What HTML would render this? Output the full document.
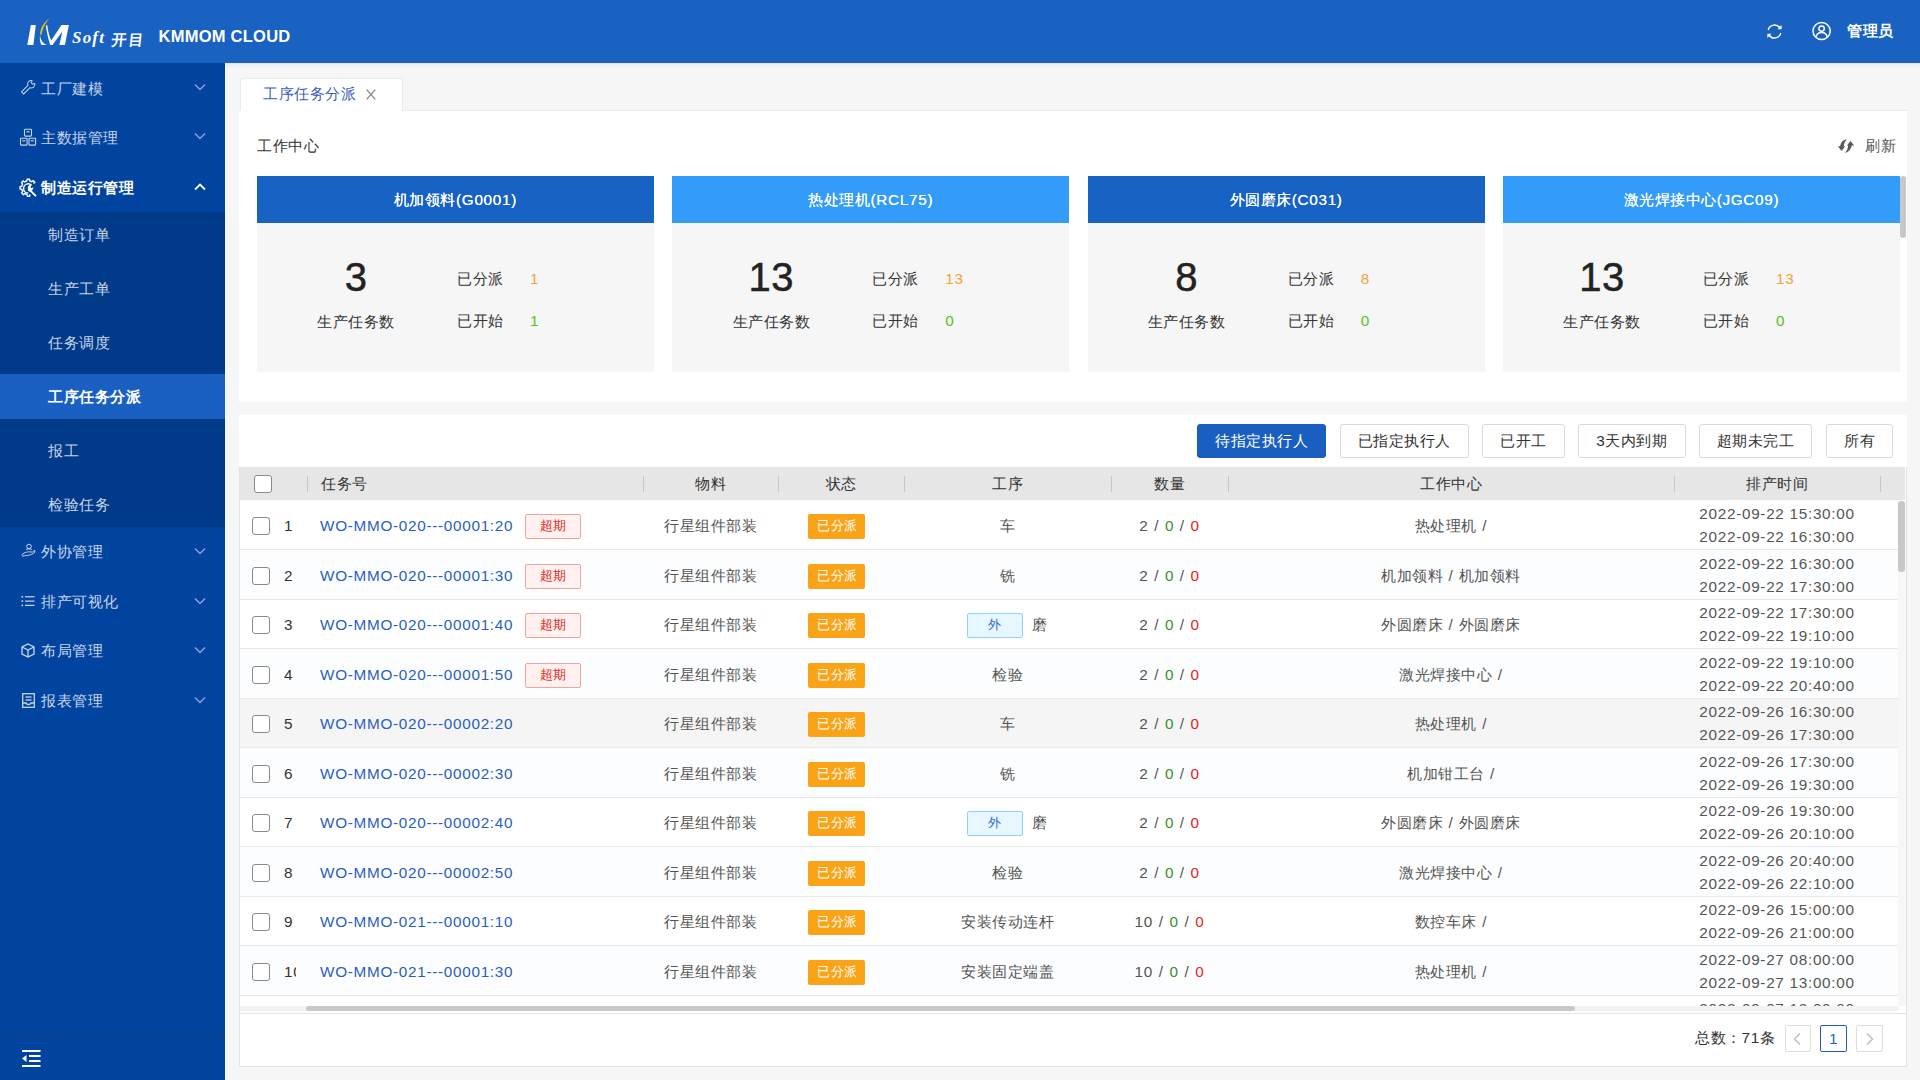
<!DOCTYPE html><html><head><meta charset="utf-8"><style>
*{box-sizing:border-box;margin:0;padding:0}
html,body{width:1920px;height:1080px;overflow:hidden;background:#f6f6f6;font-family:"Liberation Sans",sans-serif;font-size:15px;letter-spacing:0.5px;color:#333}
.L{font-size:15.3px;letter-spacing:0.7px}
.abs{position:absolute}
.t{position:absolute;white-space:nowrap;line-height:20px}
.c{text-align:center}
svg{position:absolute;overflow:visible}
</style></head><body>
<div class="abs" style="left:0px;top:0px;width:1920px;height:63px;background:#1962c2"></div>
<svg style="left:0;top:0" width="160" height="63">
<path d="M40 34.5 C40.5 27.5 44.5 21 49.5 18.4 C45.5 22.5 42.5 28 41.3 35 Z" fill="#f5c400"/>
<path d="M30.9 25 L35.8 25 L33.4 44.9 L27.3 44.9 Z" fill="#fff"/>
<path d="M40 35 C40.5 40 43 43.5 46.8 44.9 L41.5 44.9 C40 42.5 39.5 39 40 35Z" fill="#fff"/>
<path d="M45.8 25.3 L47.2 25.3 C48 31 49.5 37 51.2 40.5 L61.5 25 L68.9 25 L64.9 44.9 L59.4 44.9 L62.3 31.5 L52.5 44.9 L50.2 44.9 C48 38 46.5 31 45.8 25.3Z" fill="#fff"/>
</svg>
<div class="t" style="left:72px;top:29px;font-family:'Liberation Serif',serif;font-style:italic;font-weight:bold;font-size:17px;color:#fff;line-height:17px;letter-spacing:1.2px">Soft</div>
<div class="t" style="left:112px;top:31px;font-size:15px;color:#fff;font-weight:bold;line-height:17px;letter-spacing:2px;transform:skewX(-6deg)">开目</div>
<div class="t" style="left:158.5px;top:26px;font-size:16.5px;font-weight:bold;color:#fff;letter-spacing:0.25px;line-height:20px">KMMOM CLOUD</div>
<svg style="left:1766px;top:23px" width="17" height="17" viewBox="0 0 17 17">
<path d="M2.2 7 A6.5 6.5 0 0 1 14 5" fill="none" stroke="#fff" stroke-width="1.4"/>
<path d="M14.8 10 A6.5 6.5 0 0 1 3 12" fill="none" stroke="#fff" stroke-width="1.4"/>
<path d="M15.6 2 L15.6 6.2 L11.6 6.2 Z" fill="#fff"/>
<path d="M1.4 15 L1.4 10.8 L5.4 10.8 Z" fill="#fff"/>
</svg>
<svg style="left:1812px;top:21px" width="20" height="20" viewBox="0 0 20 20">
<circle cx="9.6" cy="10" r="8.6" fill="none" stroke="#fff" stroke-width="1.5"/>
<circle cx="9.6" cy="7.6" r="2.7" fill="none" stroke="#fff" stroke-width="1.5"/>
<path d="M3.8 16.6 C4.5 12.8 7 11.6 9.6 11.6 C12.2 11.6 14.7 12.8 15.4 16.6" fill="none" stroke="#fff" stroke-width="1.5"/>
</svg>
<div class="t" style="left:1847px;top:21px;font-weight:bold;color:#fff">管理员</div>
<div class="abs" style="left:0px;top:63px;width:225px;height:1017px;background:#0044a0"></div>
<div class="abs" style="left:0px;top:212px;width:225px;height:315px;background:#003a88"></div>
<div class="abs" style="left:0px;top:374px;width:225px;height:45px;background:#1a60c2"></div>
<div class="t" style="left:41px;top:79.2px;color:#c9d5ea;">工厂建模</div>
<svg style="left:194px;top:83px" width="12" height="8" viewBox="0 0 12 8"><path d="M1 1.5 L6 6.5 L11 1.5" fill="none" stroke="#8ea6d4" stroke-width="1.4"/></svg>
<div class="t" style="left:41px;top:128.2px;color:#c9d5ea;">主数据管理</div>
<svg style="left:194px;top:132px" width="12" height="8" viewBox="0 0 12 8"><path d="M1 1.5 L6 6.5 L11 1.5" fill="none" stroke="#8ea6d4" stroke-width="1.4"/></svg>
<div class="t" style="left:41px;top:177.7px;color:#fff;font-weight:bold;">制造运行管理</div>
<svg style="left:194px;top:183px" width="12" height="8" viewBox="0 0 12 8"><path d="M1 6.5 L6 1.5 L11 6.5" fill="none" stroke="#fff" stroke-width="1.8"/></svg>
<div class="t" style="left:48px;top:224.7px;color:#c9d5ea;">制造订单</div>
<div class="t" style="left:48px;top:278.7px;color:#c9d5ea;">生产工单</div>
<div class="t" style="left:48px;top:332.7px;color:#c9d5ea;">任务调度</div>
<div class="t" style="left:48px;top:440.7px;color:#c9d5ea;">报工</div>
<div class="t" style="left:48px;top:494.7px;color:#c9d5ea;">检验任务</div>
<div class="t" style="left:48px;top:386.7px;color:#fff;font-weight:bold;">工序任务分派</div>
<div class="t" style="left:41px;top:541.7px;color:#c9d5ea;">外协管理</div>
<svg style="left:194px;top:547px" width="12" height="8" viewBox="0 0 12 8"><path d="M1 1.5 L6 6.5 L11 1.5" fill="none" stroke="#8ea6d4" stroke-width="1.4"/></svg>
<div class="t" style="left:41px;top:591.7px;color:#c9d5ea;">排产可视化</div>
<svg style="left:194px;top:597px" width="12" height="8" viewBox="0 0 12 8"><path d="M1 1.5 L6 6.5 L11 1.5" fill="none" stroke="#8ea6d4" stroke-width="1.4"/></svg>
<div class="t" style="left:41px;top:641.2px;color:#c9d5ea;">布局管理</div>
<svg style="left:194px;top:646px" width="12" height="8" viewBox="0 0 12 8"><path d="M1 1.5 L6 6.5 L11 1.5" fill="none" stroke="#8ea6d4" stroke-width="1.4"/></svg>
<div class="t" style="left:41px;top:691.2px;color:#c9d5ea;">报表管理</div>
<svg style="left:194px;top:696px" width="12" height="8" viewBox="0 0 12 8"><path d="M1 1.5 L6 6.5 L11 1.5" fill="none" stroke="#8ea6d4" stroke-width="1.4"/></svg>
<svg style="left:14px;top:74px" width="30" height="30" viewBox="14 74 30 30" fill="none" stroke="#c9d5ea" stroke-width="1">
<path transform="translate(22.6,92.9) rotate(-45)" d="M0 -1.5 L9 -1.5 A3.5 3.5 0 0 1 15.3 -1.9 L13.3 -1.1 L13.3 1.1 L15.3 1.9 A3.5 3.5 0 0 1 9 1.5 L0 1.5 Z"/></svg>
<svg style="left:14px;top:124px" width="30" height="26" viewBox="14 124 30 26" fill="none" stroke="#c9d5ea" stroke-width="1.1">
<rect x="24.5" y="129.3" width="7" height="6.8" rx="0.8"/><path d="M26.3 131.8 H29.7"/>
<rect x="20.5" y="138.3" width="6.6" height="6.8" rx="0.6"/><path d="M22.2 140.8 H25.4"/>
<rect x="29" y="138.3" width="6.6" height="6.8" rx="0.6"/><path d="M30.7 140.8 H33.9"/></svg>
<svg style="left:16.3px;top:176px" width="30" height="26" viewBox="14 174 30 26" fill="none" stroke="#fff" stroke-width="1.4">
<path d="M31.5 181.5 L32.8 180.2 L31.2 178.6 L29.6 179.6 C29 179.3 28.4 179.1 27.8 179 L27.4 177.2 L25.2 177.2 L24.8 179 C24 179.2 23.3 179.5 22.7 180 L21.1 179 L19.6 180.6 L20.6 182.2 C20.2 182.8 19.9 183.5 19.8 184.3 L18 184.7 L18 186.9 L19.8 187.3 C19.9 188.1 20.2 188.8 20.7 189.4 L19.7 191 L21.3 192.6 L22.9 191.6 C23.5 192 24.2 192.3 25 192.5 L25.4 194.3 L27.6 194.3 L28 192.5"/>
<path d="M29.5 183.2 C28.6 182.2 27.4 181.8 26.2 181.8 C23.6 181.8 21.6 183.8 21.6 186.4 C21.6 189 23.6 191 26.2 191"/>
</svg>
<svg style="left:16.3px;top:176px" width="30" height="26" viewBox="14 174 30 26" fill="#fff">
<path d="M26 184.6 C26.6 183.2 28.2 182.6 29.6 183.2 L28.4 185 L29.4 186.2 L31.2 185.2 C31.6 186.6 30.8 188 29.6 188.4 L34.6 193.4 L33.2 194.8 L28 189.6 C26.6 190 25.4 188.8 26 184.6 Z"/>
</svg>
<svg style="left:21px;top:543px" width="15" height="15" viewBox="0 0 15 15" fill="none" stroke="#c9d5ea" stroke-width="1">
<circle cx="8" cy="3.5" r="2.3"/><path d="M5 7 C5 5.5 11 5.5 11 7"/><path d="M0.5 12 C4 9 7 8.5 10 9 C12 9.5 13.5 8 13.5 7 L14 9 C12 11.5 8 12.5 1 13"/></svg>
<svg style="left:21px;top:594px" width="14" height="14" viewBox="0 0 14 14" fill="#c9d5ea">
<rect x="0.5" y="2" width="1.6" height="1.6"/><rect x="0.5" y="6.3" width="1.6" height="1.6"/><rect x="0.5" y="10.6" width="1.6" height="1.6"/>
<rect x="4" y="2.2" width="9.5" height="1.2"/><rect x="4" y="6.5" width="9.5" height="1.2"/><rect x="4" y="10.8" width="9.5" height="1.2"/></svg>
<svg style="left:21px;top:643px" width="14" height="15" viewBox="0 0 14 15" fill="none" stroke="#c9d5ea" stroke-width="1.3">
<path d="M7 1 L13 4 L13 11 L7 14 L1 11 L1 4 Z"/><path d="M1 4 L7 7 L13 4"/><path d="M7 7 L7 14"/></svg>
<svg style="left:22px;top:693px" width="13" height="15" viewBox="0 0 13 15" fill="none" stroke="#c9d5ea" stroke-width="1.3">
<rect x="0.7" y="0.7" width="11.6" height="13.6"/><path d="M3.5 4 L9.5 4"/><path d="M3.5 7 L9.5 7"/><path d="M0.7 10 L4 10 C4.5 12 8.5 12 9 10 L12.3 10"/></svg>
<div class="abs" style="left:0px;top:1035px;width:225px;height:1px;background:#1d3d7a"></div>
<svg style="left:22px;top:1050px" width="19" height="17" viewBox="0 0 19 17" fill="#fff">
<rect x="0" y="0" width="18.5" height="2"/><rect x="7" y="5" width="11.5" height="2"/><rect x="7" y="10" width="11.5" height="2"/><rect x="0" y="15" width="18.5" height="2"/>
<path d="M0 8.5 L4.5 5 L4.5 12 Z"/></svg>
<div class="abs" style="left:225px;top:63px;width:1695px;height:5px;background:linear-gradient(#e8e8e8,#f6f6f6)"></div>
<div class="abs" style="left:239px;top:109.5px;width:1668px;height:292.5px;background:#fff;border-top:1px solid #ebebeb"></div>
<div class="abs" style="left:239.5px;top:77.5px;width:163.5px;height:33px;background:#fff;border:1px solid #ebebeb;border-bottom:none;border-radius:3px 3px 0 0"></div>
<div class="t" style="left:263px;top:83.5px;color:#3d5cb4">工序任务分派</div>
<svg style="left:366px;top:88.5px" width="10" height="11" viewBox="0 0 10 11"><path d="M0.7 0.7 L9.3 10.3 M9.3 0.7 L0.7 10.3" stroke="#808080" stroke-width="1.2"/></svg>
<div class="t" style="left:257px;top:135.5px;color:#333">工作中心</div>
<svg style="left:1832px;top:134px" width="28" height="24" viewBox="0 0 28 24" fill="#585858">
<path d="M14.9 5 C11 5.8 8.6 8.5 8.1 12.3 L5.9 12.3 L9.5 16.9 L13.1 12.3 L11.8 12.3 C12 9.5 13 7.3 14.9 5 Z"/>
<path d="M12.8 18.9 C16.6 18 19.1 15 19.7 11.4 L22.1 11.4 L18.5 6.9 L14.9 11.4 L16.1 11.4 C15.9 14.5 14.8 16.8 12.8 18.9 Z"/></svg>
<div class="t" style="left:1865px;top:136px;color:#555">刷新</div>
<div class="abs" style="left:257.0px;top:176px;width:397px;height:195.5px;background:#f6f6f6"></div>
<div class="abs" style="left:257.0px;top:176px;width:397px;height:46.8px;background:#1762c3"></div>
<div class="t c" style="left:257.0px;top:189.5px;width:397px;color:#fff;text-shadow:0 0 0.4px #fff">机加领料<span class=L>(G0001)</span></div>
<div class="t c" style="left:256.0px;top:257px;width:200px;font-size:40px;line-height:40px;color:#222;-webkit-text-stroke:0.5px #222">3</div>
<div class="t c" style="left:256.0px;top:311.5px;width:200px;color:#333">生产任务数</div>
<div class="t" style="left:457.0px;top:268.5px;color:#333">已分派</div>
<div class="t L" style="left:530.0px;top:268.5px;color:#f5a13a">1</div>
<div class="t" style="left:457.0px;top:310.5px;color:#333">已开始</div>
<div class="t L" style="left:530.0px;top:310.5px;color:#52c41a">1</div>
<div class="abs" style="left:672.3299999999999px;top:176px;width:397px;height:195.5px;background:#f6f6f6"></div>
<div class="abs" style="left:672.3299999999999px;top:176px;width:397px;height:46.8px;background:#339bf8"></div>
<div class="t c" style="left:672.3299999999999px;top:189.5px;width:397px;color:#fff;text-shadow:0 0 0.4px #fff">热处理机<span class=L>(RCL75)</span></div>
<div class="t c" style="left:671.3299999999999px;top:257px;width:200px;font-size:40px;line-height:40px;color:#222;-webkit-text-stroke:0.5px #222">13</div>
<div class="t c" style="left:671.3299999999999px;top:311.5px;width:200px;color:#333">生产任务数</div>
<div class="t" style="left:872.3299999999999px;top:268.5px;color:#333">已分派</div>
<div class="t L" style="left:945.3299999999999px;top:268.5px;color:#f5a13a">13</div>
<div class="t" style="left:872.3299999999999px;top:310.5px;color:#333">已开始</div>
<div class="t L" style="left:945.3299999999999px;top:310.5px;color:#52c41a">0</div>
<div class="abs" style="left:1087.6599999999999px;top:176px;width:397px;height:195.5px;background:#f6f6f6"></div>
<div class="abs" style="left:1087.6599999999999px;top:176px;width:397px;height:46.8px;background:#1762c3"></div>
<div class="t c" style="left:1087.6599999999999px;top:189.5px;width:397px;color:#fff;text-shadow:0 0 0.4px #fff">外圆磨床<span class=L>(C031)</span></div>
<div class="t c" style="left:1086.6599999999999px;top:257px;width:200px;font-size:40px;line-height:40px;color:#222;-webkit-text-stroke:0.5px #222">8</div>
<div class="t c" style="left:1086.6599999999999px;top:311.5px;width:200px;color:#333">生产任务数</div>
<div class="t" style="left:1287.6599999999999px;top:268.5px;color:#333">已分派</div>
<div class="t L" style="left:1360.6599999999999px;top:268.5px;color:#f5a13a">8</div>
<div class="t" style="left:1287.6599999999999px;top:310.5px;color:#333">已开始</div>
<div class="t L" style="left:1360.6599999999999px;top:310.5px;color:#52c41a">0</div>
<div class="abs" style="left:1502.99px;top:176px;width:397px;height:195.5px;background:#f6f6f6"></div>
<div class="abs" style="left:1502.99px;top:176px;width:397px;height:46.8px;background:#339bf8"></div>
<div class="t c" style="left:1502.99px;top:189.5px;width:397px;color:#fff;text-shadow:0 0 0.4px #fff">激光焊接中心<span class=L>(JGC09)</span></div>
<div class="t c" style="left:1501.99px;top:257px;width:200px;font-size:40px;line-height:40px;color:#222;-webkit-text-stroke:0.5px #222">13</div>
<div class="t c" style="left:1501.99px;top:311.5px;width:200px;color:#333">生产任务数</div>
<div class="t" style="left:1702.99px;top:268.5px;color:#333">已分派</div>
<div class="t L" style="left:1775.99px;top:268.5px;color:#f5a13a">13</div>
<div class="t" style="left:1702.99px;top:310.5px;color:#333">已开始</div>
<div class="t L" style="left:1775.99px;top:310.5px;color:#52c41a">0</div>
<div class="abs" style="left:1900px;top:176px;width:6px;height:62px;background:#c8c8c8;border-radius:3px"></div>
<div class="abs" style="left:239px;top:415px;width:1668px;height:652px;background:#fff"></div>
<div class="abs" style="left:239px;top:467px;width:1668px;height:600px;border:1px solid #e2e2e2;border-top:none"></div>
<div class="abs" style="left:1197px;top:424px;width:129px;height:34px;border-radius:3px;background:#1a5fc0;color:#fff;border:1px solid #1a5fc0;text-align:center;line-height:32px;white-space:nowrap">待指定执行人</div>
<div class="abs" style="left:1340px;top:424px;width:128.5999999999999px;height:34px;border-radius:3px;background:#fff;color:#333;border:1px solid #d9d9d9;text-align:center;line-height:32px;white-space:nowrap">已指定执行人</div>
<div class="abs" style="left:1482px;top:424px;width:82.59999999999991px;height:34px;border-radius:3px;background:#fff;color:#333;border:1px solid #d9d9d9;text-align:center;line-height:32px;white-space:nowrap">已开工</div>
<div class="abs" style="left:1578px;top:424px;width:107.59999999999991px;height:34px;border-radius:3px;background:#fff;color:#333;border:1px solid #d9d9d9;text-align:center;line-height:32px;white-space:nowrap"><span class=L>3</span>天内到期</div>
<div class="abs" style="left:1699px;top:424px;width:113.40000000000009px;height:34px;border-radius:3px;background:#fff;color:#333;border:1px solid #d9d9d9;text-align:center;line-height:32px;white-space:nowrap">超期未完工</div>
<div class="abs" style="left:1826px;top:424px;width:67px;height:34px;border-radius:3px;background:#fff;color:#333;border:1px solid #d9d9d9;text-align:center;line-height:32px;white-space:nowrap">所有</div>
<div class="abs" style="left:240px;top:467.4px;width:1665px;height:33px;background:#e6e6e6"></div>
<div class="abs" style="left:253.5px;top:475px;width:18px;height:18px;background:#fff;border:1px solid #8a8a8a;border-radius:3px"></div>
<div class="abs" style="left:307px;top:476px;width:1px;height:16px;background:#c8c8c8"></div>
<div class="abs" style="left:643px;top:476px;width:1px;height:16px;background:#c8c8c8"></div>
<div class="abs" style="left:778px;top:476px;width:1px;height:16px;background:#c8c8c8"></div>
<div class="abs" style="left:904px;top:476px;width:1px;height:16px;background:#c8c8c8"></div>
<div class="abs" style="left:1111px;top:476px;width:1px;height:16px;background:#c8c8c8"></div>
<div class="abs" style="left:1228px;top:476px;width:1px;height:16px;background:#c8c8c8"></div>
<div class="abs" style="left:1674px;top:476px;width:1px;height:16px;background:#c8c8c8"></div>
<div class="abs" style="left:1880px;top:476px;width:1px;height:16px;background:#c8c8c8"></div>
<div class="t" style="left:321px;top:474px;">任务号</div>
<div class="t c" style="left:510.5px;top:474px;width:400px;">物料</div>
<div class="t c" style="left:641.0px;top:474px;width:400px;">状态</div>
<div class="t c" style="left:807.5px;top:474px;width:400px;">工序</div>
<div class="t c" style="left:969.5px;top:474px;width:400px;">数量</div>
<div class="t c" style="left:1251.0px;top:474px;width:400px;">工作中心</div>
<div class="t c" style="left:1577.0px;top:474px;width:400px;">排产时间</div>
<div class="abs" style="left:240px;top:500.5px;width:1658px;height:505px;overflow:hidden">
<div class="abs" style="left:0;top:0.0px;width:1658px;height:49.5px;background:#fff;border-bottom:1px solid #e8e8e8">
<div class="abs" style="left:12px;top:16.55px;width:18px;height:18px;background:#fff;border:1px solid #8a8a8a;border-radius:3px"></div>
<div class="t L" style="left:44px;top:15.55px;color:#333">1</div>
<div class="t" style="left:80px;top:15.55px;color:#2a5fbf"><span class=L>WO-MMO-020---00001:20</span></div>
<div class="abs" style="left:285px;top:13.55px;width:56px;height:25px;background:#fff1f0;border:1px solid #f3a3a0;border-radius:2px;color:#e02a20;font-size:13px;line-height:22px;text-align:center">超期</div>
<div class="t c" style="left:403px;top:15.55px;width:135px;color:#555">行星组件部装</div>
<div class="abs" style="left:568px;top:13.55px;width:57px;height:25px;background:#fba316;border-radius:2px;color:#fff;font-size:13px;line-height:24px;text-align:center;padding-left:2px">已分派</div>
<div class="t c" style="left:664px;top:15.55px;width:207px;color:#555">车</div>
<div class="t c" style="left:871px;top:15.55px;width:117px;color:#555"><span class=L style="word-spacing:0.8px">2 / <span style="color:#3a8f2a">0</span> / <span style="color:#e8231e">0</span></span></div>
<div class="t c" style="left:988px;top:15.55px;width:446px;color:#555">热处理机<span class=L style="word-spacing:0.5px"> /</span></div>
<div class="t c" style="left:1434px;top:1.9499999999999993px;width:206px;color:#555;line-height:23px"><span class=L>2022-09-22 15:30:00<br>2022-09-22 16:30:00</span></div>
</div>
<div class="abs" style="left:0;top:49.5px;width:1658px;height:49.5px;background:#fcfdfe;border-bottom:1px solid #e8e8e8">
<div class="abs" style="left:12px;top:16.55px;width:18px;height:18px;background:#fff;border:1px solid #8a8a8a;border-radius:3px"></div>
<div class="t L" style="left:44px;top:15.55px;color:#333">2</div>
<div class="t" style="left:80px;top:15.55px;color:#2a5fbf"><span class=L>WO-MMO-020---00001:30</span></div>
<div class="abs" style="left:285px;top:13.55px;width:56px;height:25px;background:#fff1f0;border:1px solid #f3a3a0;border-radius:2px;color:#e02a20;font-size:13px;line-height:22px;text-align:center">超期</div>
<div class="t c" style="left:403px;top:15.55px;width:135px;color:#555">行星组件部装</div>
<div class="abs" style="left:568px;top:13.55px;width:57px;height:25px;background:#fba316;border-radius:2px;color:#fff;font-size:13px;line-height:24px;text-align:center;padding-left:2px">已分派</div>
<div class="t c" style="left:664px;top:15.55px;width:207px;color:#555">铣</div>
<div class="t c" style="left:871px;top:15.55px;width:117px;color:#555"><span class=L style="word-spacing:0.8px">2 / <span style="color:#3a8f2a">0</span> / <span style="color:#e8231e">0</span></span></div>
<div class="t c" style="left:988px;top:15.55px;width:446px;color:#555">机加领料<span class=L style="word-spacing:0.5px"><span class=L style="word-spacing:0.5px"> /</span> </span>机加领料</div>
<div class="t c" style="left:1434px;top:1.9499999999999993px;width:206px;color:#555;line-height:23px"><span class=L>2022-09-22 16:30:00<br>2022-09-22 17:30:00</span></div>
</div>
<div class="abs" style="left:0;top:99.0px;width:1658px;height:49.5px;background:#fff;border-bottom:1px solid #e8e8e8">
<div class="abs" style="left:12px;top:16.55px;width:18px;height:18px;background:#fff;border:1px solid #8a8a8a;border-radius:3px"></div>
<div class="t L" style="left:44px;top:15.55px;color:#333">3</div>
<div class="t" style="left:80px;top:15.55px;color:#2a5fbf"><span class=L>WO-MMO-020---00001:40</span></div>
<div class="abs" style="left:285px;top:13.55px;width:56px;height:25px;background:#fff1f0;border:1px solid #f3a3a0;border-radius:2px;color:#e02a20;font-size:13px;line-height:22px;text-align:center">超期</div>
<div class="t c" style="left:403px;top:15.55px;width:135px;color:#555">行星组件部装</div>
<div class="abs" style="left:568px;top:13.55px;width:57px;height:25px;background:#fba316;border-radius:2px;color:#fff;font-size:13px;line-height:24px;text-align:center;padding-left:2px">已分派</div>
<div class="abs" style="left:727px;top:13.55px;width:56px;height:25px;background:#e6f7ff;border:1px solid #91d0fb;border-radius:2px;color:#2a6ad0;font-size:13px;line-height:22px;text-align:center">外</div>
<div class="t" style="left:792px;top:15.55px;color:#555">磨</div>
<div class="t c" style="left:871px;top:15.55px;width:117px;color:#555"><span class=L style="word-spacing:0.8px">2 / <span style="color:#3a8f2a">0</span> / <span style="color:#e8231e">0</span></span></div>
<div class="t c" style="left:988px;top:15.55px;width:446px;color:#555">外圆磨床<span class=L style="word-spacing:0.5px"><span class=L style="word-spacing:0.5px"> /</span> </span>外圆磨床</div>
<div class="t c" style="left:1434px;top:1.9499999999999993px;width:206px;color:#555;line-height:23px"><span class=L>2022-09-22 17:30:00<br>2022-09-22 19:10:00</span></div>
</div>
<div class="abs" style="left:0;top:148.5px;width:1658px;height:49.5px;background:#fcfdfe;border-bottom:1px solid #e8e8e8">
<div class="abs" style="left:12px;top:16.55px;width:18px;height:18px;background:#fff;border:1px solid #8a8a8a;border-radius:3px"></div>
<div class="t L" style="left:44px;top:15.55px;color:#333">4</div>
<div class="t" style="left:80px;top:15.55px;color:#2a5fbf"><span class=L>WO-MMO-020---00001:50</span></div>
<div class="abs" style="left:285px;top:13.55px;width:56px;height:25px;background:#fff1f0;border:1px solid #f3a3a0;border-radius:2px;color:#e02a20;font-size:13px;line-height:22px;text-align:center">超期</div>
<div class="t c" style="left:403px;top:15.55px;width:135px;color:#555">行星组件部装</div>
<div class="abs" style="left:568px;top:13.55px;width:57px;height:25px;background:#fba316;border-radius:2px;color:#fff;font-size:13px;line-height:24px;text-align:center;padding-left:2px">已分派</div>
<div class="t c" style="left:664px;top:15.55px;width:207px;color:#555">检验</div>
<div class="t c" style="left:871px;top:15.55px;width:117px;color:#555"><span class=L style="word-spacing:0.8px">2 / <span style="color:#3a8f2a">0</span> / <span style="color:#e8231e">0</span></span></div>
<div class="t c" style="left:988px;top:15.55px;width:446px;color:#555">激光焊接中心<span class=L style="word-spacing:0.5px"> /</span></div>
<div class="t c" style="left:1434px;top:1.9499999999999993px;width:206px;color:#555;line-height:23px"><span class=L>2022-09-22 19:10:00<br>2022-09-22 20:40:00</span></div>
</div>
<div class="abs" style="left:0;top:198.0px;width:1658px;height:49.5px;background:#f5f5f5;border-bottom:1px solid #e8e8e8">
<div class="abs" style="left:12px;top:16.55px;width:18px;height:18px;background:#fff;border:1px solid #8a8a8a;border-radius:3px"></div>
<div class="t L" style="left:44px;top:15.55px;color:#333">5</div>
<div class="t" style="left:80px;top:15.55px;color:#2a5fbf"><span class=L>WO-MMO-020---00002:20</span></div>
<div class="t c" style="left:403px;top:15.55px;width:135px;color:#555">行星组件部装</div>
<div class="abs" style="left:568px;top:13.55px;width:57px;height:25px;background:#fba316;border-radius:2px;color:#fff;font-size:13px;line-height:24px;text-align:center;padding-left:2px">已分派</div>
<div class="t c" style="left:664px;top:15.55px;width:207px;color:#555">车</div>
<div class="t c" style="left:871px;top:15.55px;width:117px;color:#555"><span class=L style="word-spacing:0.8px">2 / <span style="color:#3a8f2a">0</span> / <span style="color:#e8231e">0</span></span></div>
<div class="t c" style="left:988px;top:15.55px;width:446px;color:#555">热处理机<span class=L style="word-spacing:0.5px"> /</span></div>
<div class="t c" style="left:1434px;top:1.9499999999999993px;width:206px;color:#555;line-height:23px"><span class=L>2022-09-26 16:30:00<br>2022-09-26 17:30:00</span></div>
</div>
<div class="abs" style="left:0;top:247.5px;width:1658px;height:49.5px;background:#fcfdfe;border-bottom:1px solid #e8e8e8">
<div class="abs" style="left:12px;top:16.55px;width:18px;height:18px;background:#fff;border:1px solid #8a8a8a;border-radius:3px"></div>
<div class="t L" style="left:44px;top:15.55px;color:#333">6</div>
<div class="t" style="left:80px;top:15.55px;color:#2a5fbf"><span class=L>WO-MMO-020---00002:30</span></div>
<div class="t c" style="left:403px;top:15.55px;width:135px;color:#555">行星组件部装</div>
<div class="abs" style="left:568px;top:13.55px;width:57px;height:25px;background:#fba316;border-radius:2px;color:#fff;font-size:13px;line-height:24px;text-align:center;padding-left:2px">已分派</div>
<div class="t c" style="left:664px;top:15.55px;width:207px;color:#555">铣</div>
<div class="t c" style="left:871px;top:15.55px;width:117px;color:#555"><span class=L style="word-spacing:0.8px">2 / <span style="color:#3a8f2a">0</span> / <span style="color:#e8231e">0</span></span></div>
<div class="t c" style="left:988px;top:15.55px;width:446px;color:#555">机加钳工台<span class=L style="word-spacing:0.5px"> /</span></div>
<div class="t c" style="left:1434px;top:1.9499999999999993px;width:206px;color:#555;line-height:23px"><span class=L>2022-09-26 17:30:00<br>2022-09-26 19:30:00</span></div>
</div>
<div class="abs" style="left:0;top:297.0px;width:1658px;height:49.5px;background:#fff;border-bottom:1px solid #e8e8e8">
<div class="abs" style="left:12px;top:16.55px;width:18px;height:18px;background:#fff;border:1px solid #8a8a8a;border-radius:3px"></div>
<div class="t L" style="left:44px;top:15.55px;color:#333">7</div>
<div class="t" style="left:80px;top:15.55px;color:#2a5fbf"><span class=L>WO-MMO-020---00002:40</span></div>
<div class="t c" style="left:403px;top:15.55px;width:135px;color:#555">行星组件部装</div>
<div class="abs" style="left:568px;top:13.55px;width:57px;height:25px;background:#fba316;border-radius:2px;color:#fff;font-size:13px;line-height:24px;text-align:center;padding-left:2px">已分派</div>
<div class="abs" style="left:727px;top:13.55px;width:56px;height:25px;background:#e6f7ff;border:1px solid #91d0fb;border-radius:2px;color:#2a6ad0;font-size:13px;line-height:22px;text-align:center">外</div>
<div class="t" style="left:792px;top:15.55px;color:#555">磨</div>
<div class="t c" style="left:871px;top:15.55px;width:117px;color:#555"><span class=L style="word-spacing:0.8px">2 / <span style="color:#3a8f2a">0</span> / <span style="color:#e8231e">0</span></span></div>
<div class="t c" style="left:988px;top:15.55px;width:446px;color:#555">外圆磨床<span class=L style="word-spacing:0.5px"><span class=L style="word-spacing:0.5px"> /</span> </span>外圆磨床</div>
<div class="t c" style="left:1434px;top:1.9499999999999993px;width:206px;color:#555;line-height:23px"><span class=L>2022-09-26 19:30:00<br>2022-09-26 20:10:00</span></div>
</div>
<div class="abs" style="left:0;top:346.5px;width:1658px;height:49.5px;background:#fcfdfe;border-bottom:1px solid #e8e8e8">
<div class="abs" style="left:12px;top:16.55px;width:18px;height:18px;background:#fff;border:1px solid #8a8a8a;border-radius:3px"></div>
<div class="t L" style="left:44px;top:15.55px;color:#333">8</div>
<div class="t" style="left:80px;top:15.55px;color:#2a5fbf"><span class=L>WO-MMO-020---00002:50</span></div>
<div class="t c" style="left:403px;top:15.55px;width:135px;color:#555">行星组件部装</div>
<div class="abs" style="left:568px;top:13.55px;width:57px;height:25px;background:#fba316;border-radius:2px;color:#fff;font-size:13px;line-height:24px;text-align:center;padding-left:2px">已分派</div>
<div class="t c" style="left:664px;top:15.55px;width:207px;color:#555">检验</div>
<div class="t c" style="left:871px;top:15.55px;width:117px;color:#555"><span class=L style="word-spacing:0.8px">2 / <span style="color:#3a8f2a">0</span> / <span style="color:#e8231e">0</span></span></div>
<div class="t c" style="left:988px;top:15.55px;width:446px;color:#555">激光焊接中心<span class=L style="word-spacing:0.5px"> /</span></div>
<div class="t c" style="left:1434px;top:1.9499999999999993px;width:206px;color:#555;line-height:23px"><span class=L>2022-09-26 20:40:00<br>2022-09-26 22:10:00</span></div>
</div>
<div class="abs" style="left:0;top:396.0px;width:1658px;height:49.5px;background:#fff;border-bottom:1px solid #e8e8e8">
<div class="abs" style="left:12px;top:16.55px;width:18px;height:18px;background:#fff;border:1px solid #8a8a8a;border-radius:3px"></div>
<div class="t L" style="left:44px;top:15.55px;color:#333">9</div>
<div class="t" style="left:80px;top:15.55px;color:#2a5fbf"><span class=L>WO-MMO-021---00001:10</span></div>
<div class="t c" style="left:403px;top:15.55px;width:135px;color:#555">行星组件部装</div>
<div class="abs" style="left:568px;top:13.55px;width:57px;height:25px;background:#fba316;border-radius:2px;color:#fff;font-size:13px;line-height:24px;text-align:center;padding-left:2px">已分派</div>
<div class="t c" style="left:664px;top:15.55px;width:207px;color:#555">安装传动连杆</div>
<div class="t c" style="left:871px;top:15.55px;width:117px;color:#555"><span class=L style="word-spacing:0.8px">10 / <span style="color:#3a8f2a">0</span> / <span style="color:#e8231e">0</span></span></div>
<div class="t c" style="left:988px;top:15.55px;width:446px;color:#555">数控车床<span class=L style="word-spacing:0.5px"> /</span></div>
<div class="t c" style="left:1434px;top:1.9499999999999993px;width:206px;color:#555;line-height:23px"><span class=L>2022-09-26 15:00:00<br>2022-09-26 21:00:00</span></div>
</div>
<div class="abs" style="left:0;top:445.5px;width:1658px;height:49.5px;background:#fcfdfe;border-bottom:1px solid #e8e8e8">
<div class="abs" style="left:12px;top:16.55px;width:18px;height:18px;background:#fff;border:1px solid #8a8a8a;border-radius:3px"></div>
<div class="t L" style="left:44px;top:15.55px;width:12px;overflow:hidden;color:#333">10</div>
<div class="t" style="left:80px;top:15.55px;color:#2a5fbf"><span class=L>WO-MMO-021---00001:30</span></div>
<div class="t c" style="left:403px;top:15.55px;width:135px;color:#555">行星组件部装</div>
<div class="abs" style="left:568px;top:13.55px;width:57px;height:25px;background:#fba316;border-radius:2px;color:#fff;font-size:13px;line-height:24px;text-align:center;padding-left:2px">已分派</div>
<div class="t c" style="left:664px;top:15.55px;width:207px;color:#555">安装固定端盖</div>
<div class="t c" style="left:871px;top:15.55px;width:117px;color:#555"><span class=L style="word-spacing:0.8px">10 / <span style="color:#3a8f2a">0</span> / <span style="color:#e8231e">0</span></span></div>
<div class="t c" style="left:988px;top:15.55px;width:446px;color:#555">热处理机<span class=L style="word-spacing:0.5px"> /</span></div>
<div class="t c" style="left:1434px;top:1.9499999999999993px;width:206px;color:#555;line-height:23px"><span class=L>2022-09-27 08:00:00<br>2022-09-27 13:00:00</span></div>
</div>
<div class="abs" style="left:0;top:495.0px;width:1658px;height:49.5px;background:#fff;border-bottom:1px solid #e8e8e8">
<div class="t c" style="left:1434px;top:1.9499999999999993px;width:206px;color:#555;line-height:23px"><span class=L>2022-09-27 13:00:00<br></span></div>
</div>
</div>
<div class="abs" style="left:1898px;top:500.5px;width:7.5px;height:505px;background:#f7f7f7"></div>
<div class="abs" style="left:1898px;top:501px;width:7px;height:71px;background:#c8c8c8;border-radius:3px"></div>
<div class="abs" style="left:240px;top:1005.5px;width:1658px;height:5.5px;background:#f2f2f2"></div>
<div class="abs" style="left:306px;top:1005.5px;width:1269px;height:5.5px;background:#c8c8c8;border-radius:3px"></div>
<div class="abs" style="left:240px;top:1012.5px;width:1666px;height:1px;background:#e4e4e4"></div>
<div class="t" style="left:1695px;top:1027.5px;color:#333">总数：<span class=L>71</span>条</div>
<div class="abs" style="left:1784.5px;top:1025px;width:26.5px;height:27px;background:#fff;border:1px solid #ddd;border-radius:2px"></div>
<svg style="left:1792px;top:1032px" width="10" height="14" viewBox="0 0 10 14"><path d="M8 1.5 L2.5 7 L8 12.5" fill="none" stroke="#bbb" stroke-width="1.3"/></svg>
<div class="abs" style="left:1820px;top:1025px;width:27px;height:27px;background:#fff;border:1.5px solid #1a5fc0;border-radius:2px"></div>
<div class="t c" style="left:1820.0px;top:1028.5px;width:27px;color:#1a5fc0"><span class=L>1</span></div>
<div class="abs" style="left:1856px;top:1025px;width:27px;height:27px;background:#fff;border:1px solid #ddd;border-radius:2px"></div>
<svg style="left:1865px;top:1032px" width="10" height="14" viewBox="0 0 10 14"><path d="M2 1.5 L7.5 7 L2 12.5" fill="none" stroke="#bbb" stroke-width="1.3"/></svg>
</body></html>
